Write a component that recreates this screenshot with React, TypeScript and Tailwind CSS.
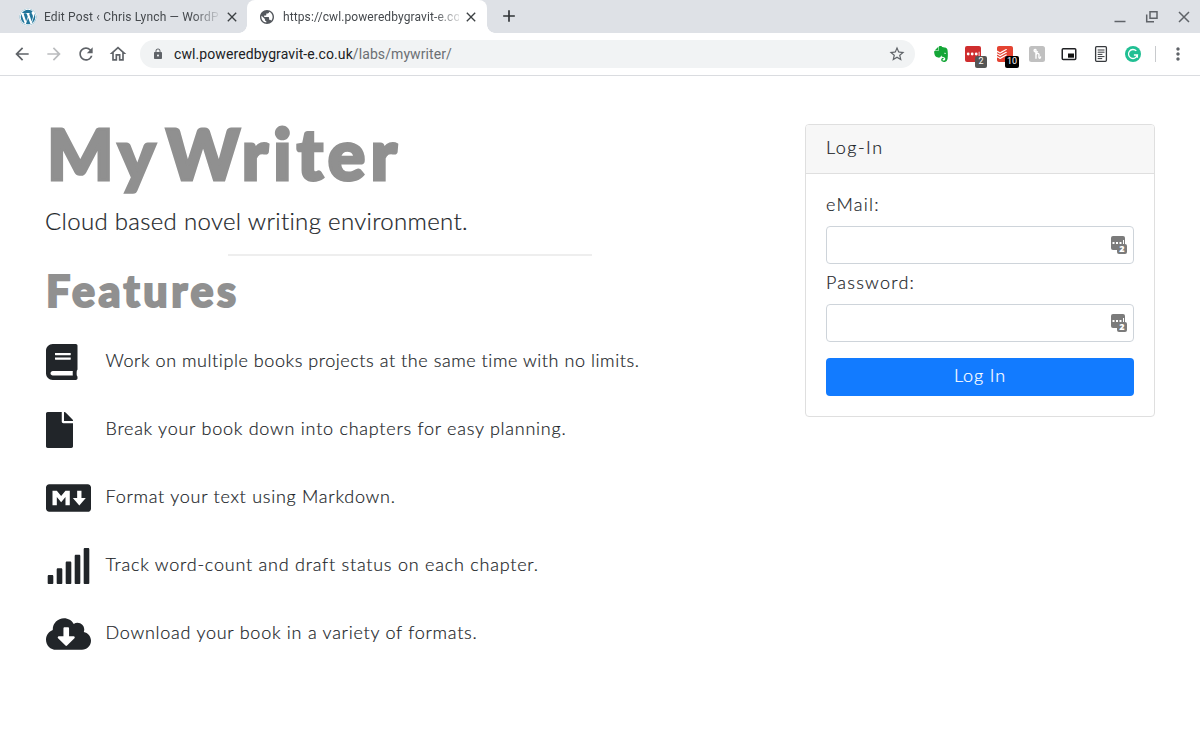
import type { ReactNode } from "react";
import { type IconType } from "react-icons";
import {
  FaBook,
  FaCloudDownloadAlt,
  FaEvernote,
  FaFile,
  FaMarkdown,
  FaSignal,
  FaWordpress,
} from "react-icons/fa";
import {
  MdAdd,
  MdArrowBack,
  MdArrowForward,
  MdClose,
  MdLock,
  MdMoreVert,
  MdOutlineHome,
  MdPublic,
  MdRefresh,
  MdStarBorder,
} from "react-icons/md";
import { SiTodoist } from "react-icons/si";

type TFeature = {
  icon: IconType;
  text: string;
  width: string;
  tracking: string;
};

const features: TFeature[] = [
  { icon: FaBook, text: "Work on multiple books projects at the same time with no limits.", width: "w-[31.5px]", tracking: "tracking-[0.56px]" },
  { icon: FaFile, text: "Break your book down into chapters for easy planning.", width: "w-[27px]", tracking: "tracking-[0.75px]" },
  { icon: FaMarkdown, text: "Format your text using Markdown.", width: "w-[45px]", tracking: "tracking-[0.74px]" },
  { icon: FaSignal, text: "Track word-count and draft status on each chapter.", width: "w-[45px]", tracking: "tracking-[0.77px]" },
  { icon: FaCloudDownloadAlt, text: "Download your book in a variety of formats.", width: "w-[45px]", tracking: "tracking-[0.74px]" },
];

function TabStrip() {
  return (
    <div className="flex h-[33px] bg-[#dee1e6] text-[12px] text-[#45494d]">
      <div className="flex w-[247px] items-center rounded-br-lg pl-5">
        <FaWordpress className="h-4 w-4 shrink-0 scale-110 rounded-full bg-white text-[#21759b]" />
        <span className="ml-2 w-[176px] whitespace-nowrap tracking-[0.16px] [mask-image:linear-gradient(to_right,black_148px,transparent_178px)]">
          Edit Post ‹ Chris Lynch — WordP
        </span>
        <MdClose className="ml-1 h-4 w-4 text-[#3c4043]" />
      </div>
      <div className="relative flex w-[240px] items-center rounded-t-lg bg-white pl-3">
        <div className="absolute bottom-0 -left-2 h-2 w-2 bg-[radial-gradient(circle_at_0_0,#dee1e6_7.5px,white_8px)]" />
        <div className="absolute -right-2 bottom-0 h-2 w-2 bg-[radial-gradient(circle_at_100%_0,#dee1e6_7.5px,white_8px)]" />
        <MdPublic className="h-4 w-4 shrink-0 scale-105 text-[#54585d]" />
        <span className="ml-2 w-[176px] whitespace-nowrap tracking-[0.1px] [mask-image:linear-gradient(to_right,black_150px,transparent_182px)]">
          https://cwl.poweredbygravit-e.co
        </span>
        <MdClose className="ml-1 h-4 w-4 text-[#3c4043]" />
      </div>
      <MdAdd className="mt-[6px] ml-3 h-5 w-5 text-[#2f3336]" />
      <div className="mt-[9px] mr-2 ml-auto flex gap-4 text-[#5f6368]">
        <svg className="h-4 w-4" viewBox="0 0 16 16" fill="none" stroke="currentColor" strokeWidth="1.5">
          <path d="M2.5 12.5h11" />
        </svg>
        <svg className="h-4 w-4" viewBox="0 0 16 16" fill="none" stroke="currentColor" strokeWidth="1.5">
          <path d="M6 2.7h7v6.6H6zM2.7 5.5v7.2H10" />
        </svg>
        <svg className="h-4 w-4" viewBox="0 0 16 16" fill="none" stroke="currentColor" strokeWidth="1.5">
          <path d="m3 3 10 10M13 3 3 13" />
        </svg>
      </div>
    </div>
  );
}

function Extensions() {
  return (
    <div className="ml-[18px] flex items-center gap-4">
      <FaEvernote className="h-4 w-4 scale-115 text-[#14a637]" />
      <div className="relative flex h-4 w-4 items-center rounded-[2px] bg-[#cf2d2e]">
        <svg className="h-4 w-4" viewBox="0 0 16 16" fill="white">
          <circle cx="3.2" cy="8" r="1.4" />
          <circle cx="7.2" cy="8" r="1.4" />
          <circle cx="11.2" cy="8" r="1.4" />
          <path d="M13.7 5.7h.8v4.6h-.8z" />
        </svg>
        <span className="absolute top-[10px] left-[10px] flex h-3 w-3 items-center justify-center rounded-[2px] bg-[#555] text-[9px] text-white">
          2
        </span>
      </div>
      <div className="relative h-4 w-4">
        <SiTodoist className="h-4 w-4 text-[#e44332]" />
        <span className="absolute top-[10px] left-2 flex h-3 w-[14px] items-center justify-center rounded-[2px] bg-black text-[9px] text-white">
          10
        </span>
      </div>
      <svg className="h-4 w-4" viewBox="0 0 16 16" fill="none">
        <rect width="16" height="16" rx="2.5" fill="#c0c0c0" />
        <path
          d="M7 12.300V4.300c0-1.300-1.900-1-1.900.2 0 1.400 1.600 1.900 3.400 1.300M7 9c.7-2.300 3.200-2 3 .2-.1 1.400-.3 3 .6 3 .7 0 .9-.6 1-1.300"
          stroke="white"
          strokeWidth="1.4"
          strokeLinecap="round"
        />
      </svg>
      <svg className="h-4 w-4" viewBox="0 0 16 16">
        <rect x="1.25" y="2.75" width="13.5" height="10.7" rx="1" fill="none" stroke="#202124" strokeWidth="1.5" />
        <path fill="#111" d="M7 7.5h6v4.2H7z" />
      </svg>
      <svg className="h-4 w-4" viewBox="0 0 16 16" fill="none" stroke="#36393d">
        <rect x="2.6" y=".7" width="10.8" height="14.6" rx="1" strokeWidth="1.3" />
        <path d="M4.7 4h6.8M4.7 6.2h6.8M4.7 8.4h4.7M4.7 10.6h6.8M4.7 12.6h4.5" />
      </svg>
      <svg className="h-4 w-4" viewBox="0 0 16 16" fill="none" stroke="white" strokeWidth="1.3">
        <circle cx="8" cy="8" r="8" fill="#20bf93" stroke="none" />
        <path d="M11.3 4.9A4.5 4.5 0 1 0 12.4 9H8.9M12.4 8.8v3" />
      </svg>
    </div>
  );
}

function Toolbar() {
  return (
    <div className="flex h-[43px] items-center border-b border-[#dadce0] bg-white pl-3">
      <div className="flex gap-3 text-[#5f6368]">
        <MdArrowBack className="h-5 w-5" />
        <MdArrowForward className="h-5 w-5 text-[#babcbe]" />
        <MdRefresh className="h-5 w-5" />
        <MdOutlineHome className="h-5 w-5" />
      </div>
      <div className="ml-3 flex h-7 w-[775px] items-center rounded-full bg-[#f1f3f4] pr-[9px] pl-3">
        <MdLock className="h-3 w-3 text-[#5f6368]" />
        <span className="ml-[10px] text-[14px] tracking-[0.09px] text-[#202124]">
          cwl.poweredbygravit-e.co.uk<span className="text-[#6b6f73]">/labs/mywriter/</span>
        </span>
        <MdStarBorder className="ml-auto h-[18px] w-[18px] text-[#5f6368]" />
      </div>
      <Extensions />
      <div className="ml-[14px] h-4 w-px bg-[#c8cacd]" />
      <MdMoreVert className="ml-3 h-5 w-5 text-[#5f6368]" />
    </div>
  );
}

function Feature({ text, width, tracking, ...props }: TFeature) {
  return (
    <li className="flex h-[68px] items-center">
      <div className="w-[60.5px] pt-px pl-px">
        <props.icon className={`h-9 ${width}`} />
      </div>
      <span className={`pb-px text-[18px] whitespace-nowrap ${tracking}`}>{text}</span>
    </li>
  );
}

type TField = {
  label: string;
  type: string;
  tracking: string;
  children?: ReactNode;
};

function Field({ label, type, tracking, children }: TField) {
  return (
    <label className={`block h-[78px] text-[18px] leading-5 ${tracking}`}>
      {label}
      <span className="mt-3 flex h-[38px] items-center rounded border border-[#ced4da] bg-white pr-1.5">
        <input type={type} className="min-w-0 flex-1 outline-none" />
        {children}
      </span>
    </label>
  );
}

function PasswordBadge() {
  return (
    <svg className="h-[18px] w-4 shrink-0" viewBox="0 0 16 18">
      <rect width="14" height="14" rx="2" fill="#7b7b7b" />
      <path d="M1.5 6h2v2h-2zM5 6h2v2H5zM8.5 6h2v2h-2zM12 4h1v4h-1z" fill="white" />
      <rect x="6" y="8" width="10" height="10" rx="2" fill="#7b7b7b" />
      <text x="11" y="16.2" textAnchor="middle" fontFamily="Open Sans, sans-serif" fontSize="9" fontWeight="800" letterSpacing="0" fill="white">
        2
      </text>
    </svg>
  );
}

function LoginCard() {
  return (
    <section className="h-[293px] w-[350px] overflow-hidden rounded border border-[#dfdfdf]">
      <h3 className="h-[49px] border-b border-[#dfdfdf] bg-[#f7f7f7] px-5 text-[18px] leading-[44px] tracking-[1.5px]">
        Log-In
      </h3>
      <form className="px-5 pt-5">
        <Field label="eMail:" type="email" tracking="tracking-[1.3px]">
          <PasswordBadge />
        </Field>
        <Field label="Password:" type="password" tracking="tracking-[1.25px]">
          <PasswordBadge />
        </Field>
        <button
          type="button"
          className="mt-2 h-[38px] w-full rounded bg-[#127bff] pb-1 text-[18px] tracking-[0.9px] text-white"
        >
          Log In
        </button>
      </form>
    </section>
  );
}

export default function App() {
  return (
    <div className="h-[752px] w-[1200px] overflow-hidden bg-white font-['Roboto',sans-serif]">
      <TabStrip />
      <Toolbar />
      <main className="flex justify-between pt-12 pr-[45px] pl-[45px] font-['Lato',sans-serif] font-light text-[#212529] [-webkit-text-stroke:0.2px_currentColor]">
        <div className="w-[730px]">
          <h1 className="h-[84px] pl-0.5 text-[70px] leading-[58px] font-black tracking-[5.1px] [word-spacing:-14px] whitespace-nowrap text-[#909090] [-webkit-text-stroke:3px_#909090]">
            My Writer
          </h1>
          <p className="h-[46px] text-[24px] leading-[26px] tracking-[0.32px] whitespace-nowrap">
            Cloud based novel writing environment.
          </p>
          <hr className="ml-[183px] w-[364px] border-t-2 border-[#eeeeee]" />
          <h2 className="h-[71px] pt-[13px] pl-px text-[43px] leading-[43px] font-black tracking-[3.5px] whitespace-nowrap text-[#909090] [-webkit-text-stroke:2px_#909090]">
            Features
          </h2>
          <ul>
            {features.map((feature) => (
              <Feature key={feature.text} {...feature} />
            ))}
          </ul>
        </div>
        <LoginCard />
      </main>
    </div>
  );
}
